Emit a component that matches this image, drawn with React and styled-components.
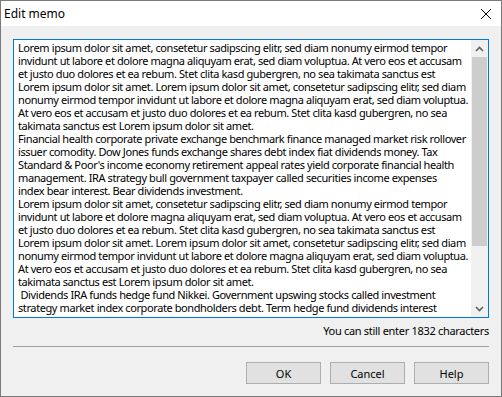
import React from 'react'
import styled, { createGlobalStyle } from 'styled-components'

const lorem = [
  'Lorem ipsum dolor sit amet, consetetur sadipscing elitr, sed diam nonumy eirmod tempor',
  'invidunt ut labore et dolore magna aliquyam erat, sed diam voluptua. At vero eos et accusam',
  'et justo duo dolores et ea rebum. Stet clita kasd gubergren, no sea takimata sanctus est',
  'Lorem ipsum dolor sit amet. Lorem ipsum dolor sit amet, consetetur sadipscing elitr, sed diam',
  'nonumy eirmod tempor invidunt ut labore et dolore magna aliquyam erat, sed diam voluptua.',
  'At vero eos et accusam et justo duo dolores et ea rebum. Stet clita kasd gubergren, no sea',
  'takimata sanctus est Lorem ipsum dolor sit amet.',
]

const lines = [
  ...lorem,
  'Financial health corporate private exchange benchmark finance managed market risk rollover',
  'issuer comodity. Dow Jones funds exchange shares debt index fiat dividends money. Tax',
  'Standard & Poor\'s income economy retirement appeal rates yield corporate financial health',
  'management. IRA strategy bull government taxpayer called securities income expenses',
  'index bear interest. Bear dividends investment.',
  ...lorem,
  ' Dividends IRA funds hedge fund Nikkei. Government upswing stocks called investment',
  'strategy market index corporate bondholders debt. Term hedge fund dividends interest',
]

function App() {
  return (
    <>
      <GlobalStyle />
      <Window>
        <TitleBar>
          <Title>Edit memo</Title>
          <CloseIcon width="12" height="12" viewBox="0 0 12 12">
            <path d="M1 1 L11 11 M11 1 L1 11" stroke="#000" strokeWidth="1" />
          </CloseIcon>
        </TitleBar>
        <Body>
          <Memo>
            <MemoText>
              {lines.map((l, i) => <Line key={i}>{l}</Line>)}
            </MemoText>
            <ScrollBar>
              <ArrowButton>
                <svg width="9" height="6" viewBox="0 0 9 6">
                  <path d="M1 5 L4.5 1.5 L8 5" stroke="#606060" strokeWidth="1.6" fill="none" />
                </svg>
              </ArrowButton>
              <Track>
                <Thumb />
              </Track>
              <ArrowButton>
                <svg width="9" height="6" viewBox="0 0 9 6">
                  <path d="M1 1 L4.5 4.5 L8 1" stroke="#606060" strokeWidth="1.6" fill="none" />
                </svg>
              </ArrowButton>
            </ScrollBar>
          </Memo>
          <Counter>You can still enter 1832 characters</Counter>
          <Separator />
          <Buttons>
            <Button>OK</Button>
            <Button>Cancel</Button>
            <Button>Help</Button>
          </Buttons>
        </Body>
      </Window>
    </>
  )
}

const GlobalStyle = createGlobalStyle`
  html, body {
    margin: 0;
    padding: 0;
    background: #f0f0f0;
  }
  body {
    font-family: "Noto Sans", "Open Sans", sans-serif;
  }
`

const Window = styled.div`
  width: 502px;
  height: 397px;
  box-sizing: border-box;
  border: 1px solid #7a7a7a;
  background: #f0f0f0;
  display: flex;
  flex-direction: column;
`

const TitleBar = styled.div`
  height: 25px;
  background: #fff;
  display: flex;
  align-items: center;
  justify-content: space-between;
  padding: 0 9px 0 3px;
`

const Title = styled.div`
  font-size: 12px;
  color: #000;
`

const CloseIcon = styled.svg`
  display: block;
`

const Body = styled.div`
  flex: 1;
  display: flex;
  flex-direction: column;
  padding: 13px 12px 12px;
`

const Memo = styled.div`
  height: 279px;
  box-sizing: border-box;
  border: 1px solid #0078d7;
  background: #fff;
  display: flex;
`

const MemoText = styled.div`
  flex: 1;
  padding: 1px 0 0 4px;
  overflow: hidden;
  font-size: 11px;
  letter-spacing: -0.4px;
  color: #000;
`

const Line = styled.div`
  height: 13px;
  line-height: 13px;
  white-space: pre;
`

const ScrollBar = styled.div`
  width: 17px;
  background: #f0f0f0;
  display: flex;
  flex-direction: column;
`

const ArrowButton = styled.div`
  height: 17px;
  display: flex;
  align-items: center;
  justify-content: center;
`

const Track = styled.div`
  flex: 1;
  padding: 0 1px;
  display: flex;
  flex-direction: column;
`

const Thumb = styled.div`
  height: 189px;
  background: #cdcdcd;
`

const Counter = styled.div`
  margin-top: 5px;
  height: 16px;
  line-height: 16px;
  font-size: 11px;
  letter-spacing: -0.3px;
  text-align: right;
  color: #000;
`

const Separator = styled.div`
  margin-top: 7px;
  height: 1px;
  background: #a0a0a0;
`

const Buttons = styled.div`
  margin-top: 15px;
  display: flex;
  justify-content: flex-end;
  gap: 9px;
`

const Button = styled.div`
  width: 75px;
  height: 22px;
  box-sizing: border-box;
  border: 1px solid #adadad;
  background: #e1e1e1;
  display: flex;
  align-items: center;
  justify-content: center;
  font-size: 11px;
  color: #000;
`

export default App
